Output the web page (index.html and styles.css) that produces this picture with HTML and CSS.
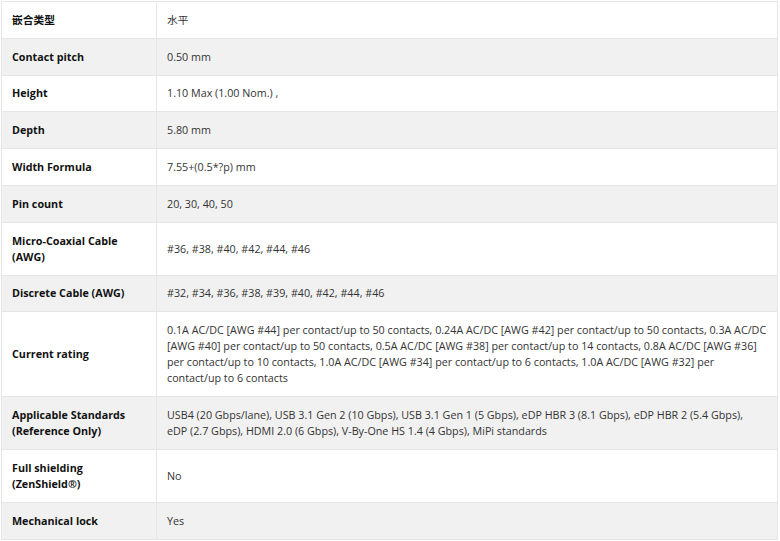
FILE: index.html
```html
<!DOCTYPE html>
<html lang="zh">
<head>
<meta charset="utf-8">
<link rel="stylesheet" href="styles.css">
</head>
<body>
<table class="spec">
  <tbody>
    <tr><th>嵌合类型</th><td>水平</td></tr>
    <tr><th>Contact pitch</th><td>0.50 mm</td></tr>
    <tr><th>Height</th><td>1.10 Max (1.00 Nom.) ,</td></tr>
    <tr><th>Depth</th><td>5.80 mm</td></tr>
    <tr><th>Width Formula</th><td>7.55+(0.5*?p) mm</td></tr>
    <tr><th>Pin count</th><td>20, 30, 40, 50</td></tr>
    <tr><th>Micro-Coaxial Cable (AWG)</th><td>#36, #38, #40, #42, #44, #46</td></tr>
    <tr><th>Discrete Cable (AWG)</th><td>#32, #34, #36, #38, #39, #40, #42, #44, #46</td></tr>
    <tr><th>Current rating</th><td>0.1A AC/DC [AWG #44] per contact/up to 50 contacts, 0.24A AC/DC [AWG #42] per contact/up to 50 contacts, 0.3A AC/DC [AWG #40] per contact/up to 50 contacts, 0.5A AC/DC [AWG #38] per contact/up to 14 contacts, 0.8A AC/DC [AWG #36] per contact/up to 10 contacts, 1.0A AC/DC [AWG #34] per contact/up to 6 contacts, 1.0A AC/DC [AWG #32] per contact/up to 6 contacts</td></tr>
    <tr><th>Applicable Standards (Reference Only)</th><td>USB4 (20 Gbps/lane), USB 3.1 Gen 2 (10 Gbps), USB 3.1 Gen 1 (5 Gbps), eDP HBR 3 (8.1 Gbps), eDP HBR 2 (5.4 Gbps), eDP&nbsp;(2.7 Gbps), HDMI 2.0 (6 Gbps), V-By-One HS 1.4 (4 Gbps), MiPi standards</td></tr>
    <tr><th>Full shielding (ZenShield®)</th><td>No</td></tr>
    <tr><th>Mechanical lock</th><td>Yes</td></tr>
  </tbody>
</table>
</body>
</html>
```

FILE: styles.css
```css
html, body {
  margin: 0;
  padding: 0;
  background: #fff;
}
body {
  padding: 1px 0 0 1px;
  font-family: "Open Sans", "Noto Sans CJK SC", sans-serif;
  font-size: 10.74px;
  line-height: 16px;
  color: #222;
}
.spec {
  border-collapse: collapse;
  width: 777px;
  table-layout: fixed;
}
.spec th, .spec td {
  border: 1px solid #e6e6e6;
  padding: 9.8px 10px 10px;
  text-align: left;
  vertical-align: middle;
}
.spec th {
  width: 134px;
  font-weight: 700;
  color: #111;
}
.spec td {
  color: #333;
  padding-right: 8px;
}
.spec tr:nth-child(even) th,
.spec tr:nth-child(even) td {
  background: #f1f1f1;
}
```
